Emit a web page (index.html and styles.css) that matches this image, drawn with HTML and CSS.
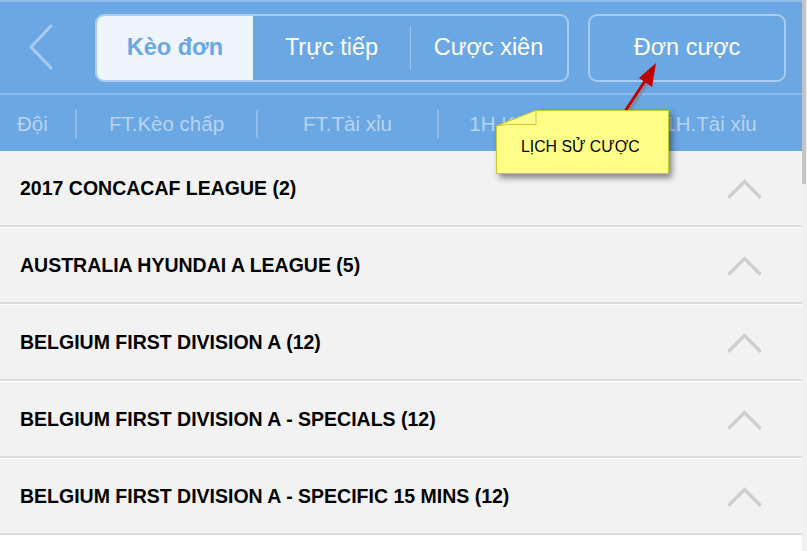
FILE: index.html
```html
<!DOCTYPE html>
<html>
<head>
  <title>Kèo đơn</title>
  <link rel="stylesheet" href="styles.css">
</head>
<body>
  <div class="app">
    <div class="main">
      <div class="header">
        <div class="topbar">
          <a class="back">
            <svg width="26" height="46" viewBox="0 0 26 46"><path d="M23 2 L3 23 L23 44" fill="none" stroke="#a9cbf1" stroke-width="3" stroke-linecap="round" stroke-linejoin="round"/></svg>
          </a>
          <div class="tabs">
            <div class="tab active">Kèo đơn</div>
            <div class="tab">Trực tiếp</div>
            <div class="tab sep">Cược xiên</div>
          </div>
          <div class="bets">Đơn cược</div>
        </div>
        <div class="cols">
          <div class="col first">Đội</div>
          <div class="col">FT.Kèo chấp</div>
          <div class="col">FT.Tài xỉu</div>
          <div class="col">1H.Kèo chấp</div>
          <div class="col">1H.Tài xỉu</div>
        </div>
      </div>

      <div class="list">
        <div class="row"><span>2017 CONCACAF LEAGUE (2)</span><i class="up"></i></div>
        <div class="row"><span>AUSTRALIA HYUNDAI A LEAGUE (5)</span><i class="up"></i></div>
        <div class="row"><span>BELGIUM FIRST DIVISION A (12)</span><i class="up"></i></div>
        <div class="row"><span>BELGIUM FIRST DIVISION A - SPECIALS (12)</span><i class="up"></i></div>
        <div class="row"><span>BELGIUM FIRST DIVISION A - SPECIFIC 15 MINS (12)</span><i class="up"></i></div>
      </div>
    </div>
    <div class="scroll"><div class="thumb"></div></div>
  </div>

  <!-- callout -->
  <svg class="arrow" width="60" height="70" viewBox="0 0 60 70">
    <line x1="6" y1="64" x2="33" y2="23" stroke="#7a7a7a" stroke-opacity="0.5" stroke-width="3" transform="translate(2,3)"/>
    <line x1="6" y1="64" x2="33" y2="23" stroke="#c00000" stroke-width="3"/>
    <polygon points="42,8 38,32 25,23" fill="#c00000"/>
  </svg>
  <div class="note">
    <svg class="shape" width="182" height="74" viewBox="0 0 182 74">
      <path class="body" d="M0.5 16 L40 0.5 L172.5 0.5 L172.5 63.5 L0.5 63.5 Z"/>
      <path class="fold" d="M0.5 16 L40 0.5 L40 14.5 L11 14.5 Z"/>
    </svg>
    <span class="label">LỊCH SỬ CƯỢC</span>
  </div>
</body>
</html>
```

FILE: styles.css
```css
body {
  margin: 0;
  font-family: "Liberation Sans", Arial, sans-serif;
  background: #fff;
  overflow: hidden;
}
.app {
  display: grid;
  grid-template-columns: 802px 5px;
  height: 551px;
  overflow: hidden;
}
.header {
  background: #6ba7e3;
  border-top: 2px solid #8ebceb;
}
.topbar {
  height: 91px;
  display: flex;
  align-items: center;
  border-bottom: 2px solid #8dbbeb;
}
.back {
  width: 95px;
  padding-left: 28px;
  box-sizing: border-box;
  display: flex;
  margin-top: -1px;
}
.tabs {
  display: flex;
  width: 474px;
  height: 68px;
  box-sizing: border-box;
  border: 2px solid #a9cbf1;
  border-radius: 9px;
  overflow: hidden;
}
.tab {
  flex: 1;
  display: flex;
  align-items: center;
  justify-content: center;
  color: #fff;
  font-size: 23.5px;
  position: relative;
}
.tab.active {
  flex: 0 0 156px;
  background: #eef5fd;
  color: #6ba7e3;
  font-weight: bold;
}
.tab.sep::before {
  content: "";
  position: absolute;
  left: 0;
  top: 10px;
  bottom: 10px;
  border-left: 1px solid #9cc4ee;
}
.bets {
  width: 198px;
  height: 68px;
  box-sizing: border-box;
  margin-left: 19px;
  border: 2px solid #a9cbf1;
  border-radius: 9px;
  display: flex;
  align-items: center;
  justify-content: center;
  color: #fff;
  font-size: 23.5px;
}
.cols {
  height: 56px;
  display: flex;
  align-items: center;
}
.col {
  width: 181px;
  text-align: center;
  color: #b7d4f3;
  font-size: 20.5px;
  border-right: 2px solid #8fbcec;
  box-sizing: border-box;
  line-height: 28px;
  margin-top: 2px;
}
.col.first {
  width: 77px;
  text-align: left;
  padding-left: 17px;
}
.col:last-child {
  border-right: 0;
}
.list {
  background: #fff;
}
.row {
  height: 74px;
  background: #f2f2f2;
  border-bottom: 2px solid #dcdcdc;
  margin-bottom: 1px;
  display: flex;
  align-items: center;
  justify-content: space-between;
  padding: 0 45px 0 20px;
  font-size: 19.5px;
  font-weight: bold;
  color: #000;
}
.up {
  width: 21px;
  height: 21px;
  border-top: 4px solid #cfcfcf;
  border-left: 4px solid #cfcfcf;
  border-radius: 2px;
  transform: rotate(45deg);
  margin-top: 16px;
}
.scroll {
  background: #f0f0f0;
}
.thumb {
  width: 4px;
  height: 184px;
  background: #c4c4c4;
}
.note {
  position: absolute;
  left: 496px;
  top: 110px;
  width: 182px;
  height: 74px;
}
.shape {
  position: absolute;
  left: 0;
  top: 0;
  filter: drop-shadow(3px 4px 3px rgba(0, 0, 0, 0.45));
}
.body {
  fill: #ffff88;
  stroke: #c9c92a;
}
.fold {
  fill: #ffff8c;
  stroke: #c9c92a;
}
.label {
  position: absolute;
  left: 25px;
  top: 28px;
  font-size: 15.8px;
  color: #000;
  white-space: nowrap;
}
.arrow {
  position: absolute;
  left: 614px;
  top: 55px;
}
```
